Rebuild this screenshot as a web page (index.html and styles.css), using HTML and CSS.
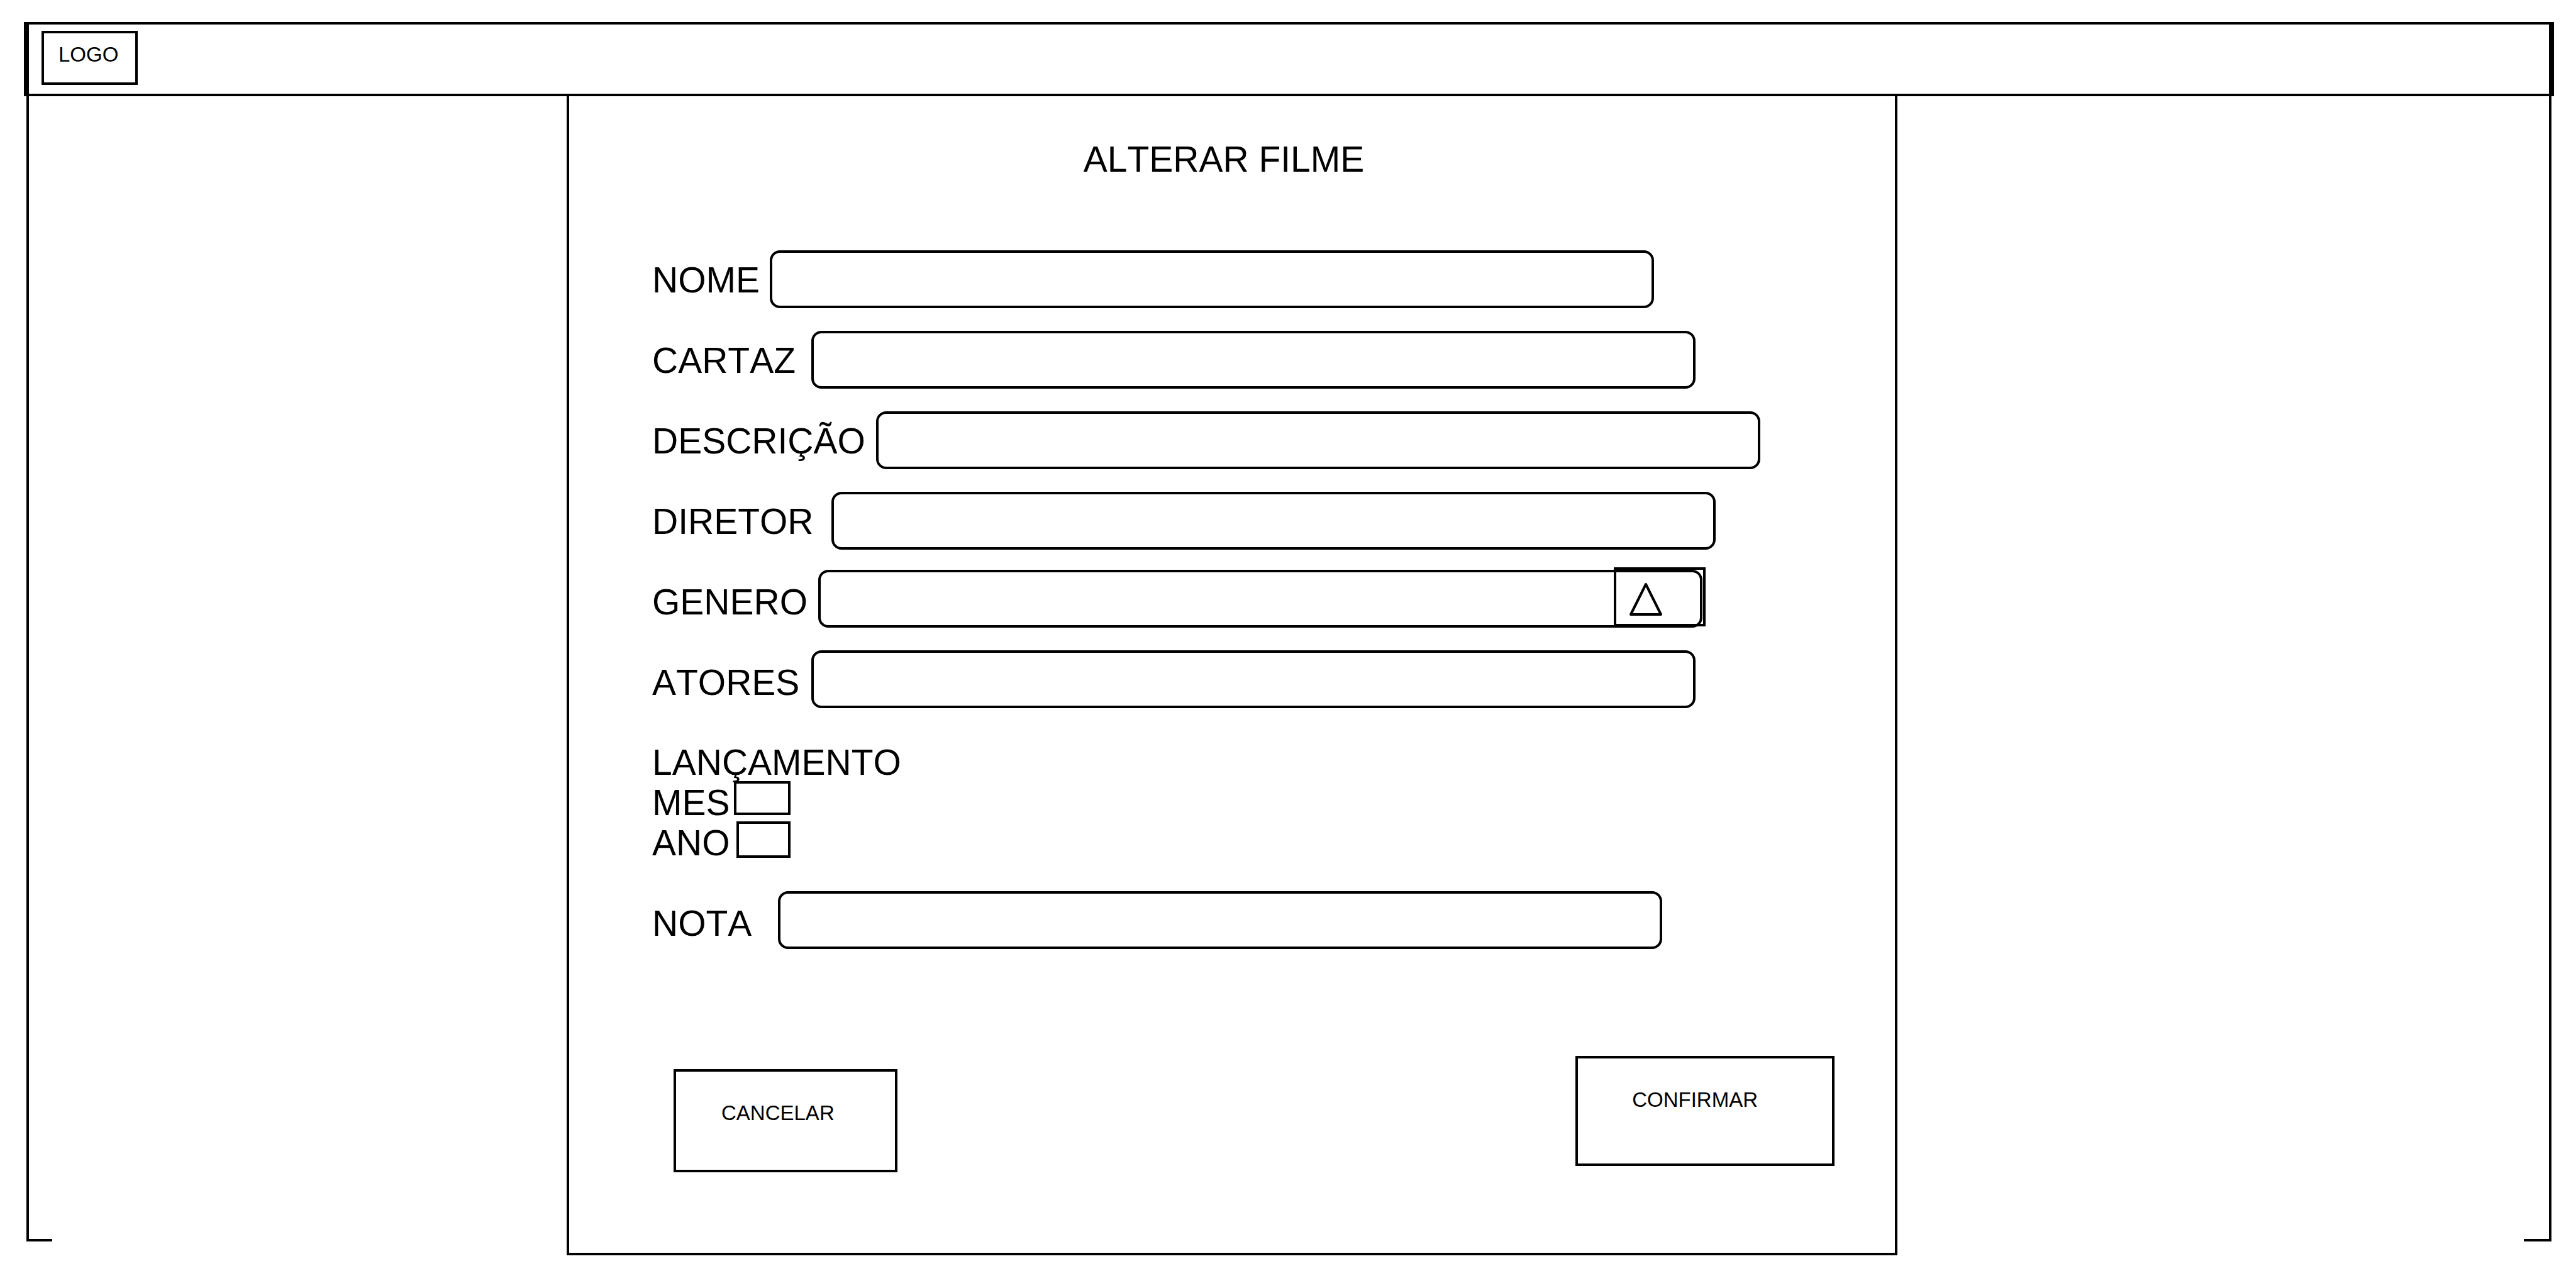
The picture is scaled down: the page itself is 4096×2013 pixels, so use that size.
FILE: index.html
```html
<!DOCTYPE html>
<html lang="pt-BR">
<head>
  <meta charset="utf-8">
  <meta name="viewport" content="width=device-width, initial-scale=1">
  <title>Alterar filme</title>
  <link rel="stylesheet" href="styles.css">
</head>
<body>
  <header class="topbar">
    <a class="logo" href="#">LOGO</a>
  </header>

  <main class="stage">
    <div class="rail rail--left"></div>

    <form class="panel">
      <h1 class="title">ALTERAR FILME</h1>

      <div class="field">
        <label class="label label--nome" for="nome">NOME</label>
        <div class="control"><input class="box" id="nome" type="text"></div>
      </div>
      <div class="field">
        <label class="label label--medium" for="cartaz">CARTAZ</label>
        <div class="control"><input class="box" id="cartaz" type="text"></div>
      </div>
      <div class="field">
        <label class="label label--descricao" for="descricao">DESCRIÇÃO</label>
        <div class="control"><input class="box" id="descricao" type="text"></div>
      </div>
      <div class="field">
        <label class="label label--diretor" for="diretor">DIRETOR</label>
        <div class="control"><input class="box" id="diretor" type="text"></div>
      </div>
      <div class="field field--raised">
        <label class="label label--genero" for="genero">GENERO</label>
        <div class="control">
          <select class="box" id="genero"><option value=""></option></select>
          <span class="picker" aria-hidden="true">
            <svg class="picker-icon" viewBox="0 0 54 54">
              <polygon points="27,3 51,51 3,51"/>
            </svg>
          </span>
        </div>
      </div>
      <div class="field field--raised">
        <label class="label label--medium" for="atores">ATORES</label>
        <div class="control"><input class="box" id="atores" type="text"></div>
      </div>

      <div class="release" role="group" aria-labelledby="lancamento">
        <span class="release-title" id="lancamento">LANÇAMENTO</span>
        <div class="release-row">
          <label class="release-label release-label--mes" for="mes">MES</label>
          <input class="release-box release-box--mes" id="mes" type="text">
        </div>
        <div class="release-row">
          <label class="release-label release-label--ano" for="ano">ANO</label>
          <input class="release-box release-box--ano" id="ano" type="text">
        </div>
      </div>

      <div class="field field--raised">
        <label class="label label--nota" for="nota">NOTA</label>
        <div class="control"><input class="box" id="nota" type="text"></div>
      </div>

      <div class="actions">
        <button class="button button--cancel" type="button">CANCELAR</button>
        <button class="button button--confirm" type="submit">CONFIRMAR</button>
      </div>
    </form>

    <div class="rail rail--right"></div>
  </main>
</body>
</html>
```

FILE: styles.css
```css
* {
  box-sizing: border-box;
}

body {
  display: flex;
  flex-direction: column;
  min-height: 100vh;
  margin: 0;
  padding: 35px 35px 17px 38px;
  background: #fff;
  color: #000;
  font-family: "Liberation Sans", Arial, sans-serif;
  font-size: 57px;
  line-height: 64px;
  font-kerning: none;
}

input,
select,
button {
  margin: 0;
  border: 4px solid #000;
  border-radius: 0;
  background: transparent;
  color: inherit;
  font: inherit;
  font-kerning: none;
}

/* Top bar */

.topbar {
  display: flex;
  align-items: flex-start;
  padding: 10px 20px 14px;
  border: solid #000;
  border-width: 4px 8px;
}

.logo {
  padding: 15px 27px 25px 23px;
  border: 4px solid #000;
  color: inherit;
  font-size: 33px;
  line-height: 38px;
  text-decoration: none;
}

/* Side rails and the centre panel */

.stage {
  display: grid;
  flex: 1;
  grid-template-columns: 41px minmax(0, 818fr) minmax(0, 2116fr) minmax(0, 996fr) 44px;
  margin-top: -4px;
  padding: 0 4px;
}

.rail {
  margin-bottom: 22px;
  border-bottom: 4px solid #000;
}

.rail--left {
  grid-column: 1;
  border-left: 4px solid #000;
}

.rail--right {
  grid-column: 5;
  border-right: 4px solid #000;
}

.panel {
  grid-column: 3;
  padding: 68px 96px 127px 132px;
  border: 4px solid #000;
}

.title {
  margin: 0 0 95px;
  padding-right: 62px;
  font-size: 57px;
  font-weight: 400;
  text-align: center;
}

/* Fields */

.field {
  display: flex;
  align-items: center;
  height: 128px;
}

.label {
  flex: none;
  padding-top: 2px;
}

.label--nome {
  width: 187px;
}

.label--nota {
  width: 200px;
}

.label--medium {
  width: 253px;
}

.label--genero {
  width: 264px;
}

.label--diretor {
  width: 285px;
}

.label--descricao {
  width: 356px;
}

.control {
  position: relative;
  flex: 0 1 1406px;
  min-width: 0;
}

.field--raised .control {
  margin-bottom: 8px;
}

.box {
  display: block;
  width: 100%;
  height: 92px;
  padding: 0 20px;
  border-radius: 16px;
  appearance: none;
}

.picker {
  position: absolute;
  top: -4px;
  right: -5px;
  width: 146px;
  height: 94px;
  padding: 20px;
  border: 4px solid #000;
  pointer-events: none;
}

.picker-icon {
  display: block;
  width: 54px;
  height: 54px;
  fill: none;
  stroke: #000;
  stroke-width: 4;
  stroke-linejoin: round;
}

/* Release date */

.release {
  padding: 32px 0 31px;
}

.release-title {
  display: block;
}

.release-row {
  display: flex;
  align-items: flex-start;
  width: 220px;
  height: 64px;
}

.release-label {
  flex: none;
}

.release-label--mes {
  width: 130px;
}

.release-label--ano {
  width: 134px;
}

.release-box {
  flex: 1;
  min-width: 0;
  margin-top: -2px;
  padding: 0 8px;
  font-size: 33px;
}

.release-box--mes {
  height: 54px;
}

.release-box--ano {
  height: 58px;
}

/* Actions */

.actions {
  display: flex;
  justify-content: space-between;
  align-items: flex-start;
  margin-top: 148px;
  padding-left: 34px;
}

.button {
  font-size: 33px;
  line-height: 38px;
}

.button--cancel {
  margin-top: 21px;
  padding: 47px 96px 71px 72px;
}

.button--confirm {
  padding: 47px 118px 82px 86px;
}
```
